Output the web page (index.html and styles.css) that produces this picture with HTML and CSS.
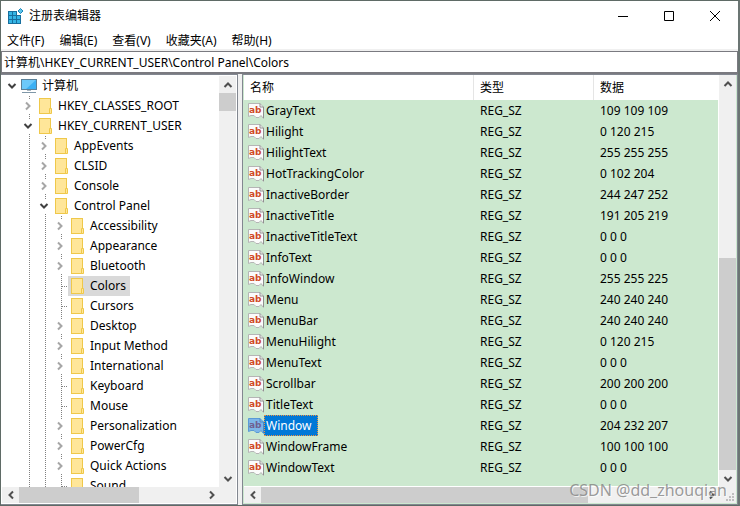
FILE: index.html
```html
<!DOCTYPE html>
<html lang="zh-CN">
<head>
    <meta charset="UTF-8">
    <meta name="viewport" content="width=device-width, initial-scale=1.0">
    <title>注册表编辑器</title>
    <link rel="stylesheet" href="styles.css">
</head>
<body>
    <!-- Shared icons -->
    <svg class="icon-defs" aria-hidden="true">
        <symbol id="folder" viewBox="0 0 16 16">
            <rect x="2.5" y="0.5" width="11" height="15" fill="#ffe699" stroke="#efc84a"/>
            <path d="M12.5 10.5h2v5h-2z" fill="#ffe699" stroke="#efc84a"/>
        </symbol>
        <symbol id="computer" viewBox="0 0 16 16">
            <rect x="0.5" y="1.5" width="15" height="10" fill="#3bb0f4" stroke="#5a8099"/>
            <path d="M1 2h14L5 11H1z" fill="#6cc9fa"/>
            <path d="M6 12h4v1H6z" fill="#a9b6c0"/>
            <path d="M1 14h14v1H1z" fill="#7f97a8"/>
        </symbol>
        <symbol id="string" viewBox="0 0 16 16">
            <path class="paper" d="M0.5 0.5H12L15.5 4v11.5L13 12.5l-2 2H8l-2-2H3l-2.500 1z"/>
            <path class="fold" d="M12 0.5V4h3.5V15"/>
            <text x="1" y="10" class="ab">ab</text>
        </symbol>
        <symbol id="down" viewBox="0 0 10 10"><path d="M1.5 3L5 6.5L8.5 3"/></symbol>
        <symbol id="up" viewBox="0 0 10 10"><path d="M1.5 7L5 3.5L8.5 7"/></symbol>
        <symbol id="right" viewBox="0 0 10 10"><path d="M3 1.5L6.5 5L3 8.5"/></symbol>
        <symbol id="left" viewBox="0 0 10 10"><path d="M7 1.5L3.5 5L7 8.5"/></symbol>
    </svg>

    <div class="window">
        <div class="title-bar">
            <svg class="app-icon" viewBox="0 0 16 16" aria-hidden="true">
                <path d="M0 3h13v13H0z" fill="#176f9e"/>
                <path d="M1 4h3v3H1zM5 4h3v3H5zM1 8h3v3H1zM5 8h3v3H5zM9 8h3v3H9zM1 12h3v3H1zM5 12h3v3H5zM9 12h3v3H9z" fill="#35b5e5"/>
                <path d="M9 2h7v5H9z" fill="#fff"/>
                <path d="M12.5 0.500L15 3L12.5 5.500L10 3z" fill="#5cc4ec" stroke="#1c86b8"/>
            </svg>
            <h1>注册表编辑器</h1>
            <div class="window-buttons">
                <button aria-label="最小化"><svg viewBox="0 0 10 10"><path d="M0 5.5h10"/></svg></button>
                <button aria-label="最大化"><svg viewBox="0 0 10 10"><path d="M0.5 0.5h9v9h-9z"/></svg></button>
                <button aria-label="关闭"><svg viewBox="0 0 10 10"><path d="M0 0L10 10M10 0L0 10"/></svg></button>
            </div>
        </div>

        <div class="menu-bar">
            <button>文件(F)</button>
            <button>编辑(E)</button>
            <button>查看(V)</button>
            <button>收藏夹(A)</button>
            <button>帮助(H)</button>
        </div>

        <input class="address" type="text" aria-label="地址" value="计算机\HKEY_CURRENT_USER\Control Panel\Colors">

        <div class="panes">
            <!-- Key tree -->
            <div class="pane tree-pane">
                <div class="pane-body">
                    <ul class="tree">
                        <li>
                            <div class="node"><span class="toggle root open"><svg><use href="#down"/></svg></span><span class="key"><svg class="icon"><use href="#computer"/></svg>计算机</span></div>
                            <ul>
                                <li><div class="node"><span class="toggle"><svg><use href="#right"/></svg></span><span class="key"><svg class="icon"><use href="#folder"/></svg>HKEY_CLASSES_ROOT</span></div></li>
                                <li class="branch">
                                    <div class="node"><span class="toggle open"><svg><use href="#down"/></svg></span><span class="key"><svg class="icon"><use href="#folder"/></svg>HKEY_CURRENT_USER</span></div>
                                    <ul>
                                        <li><div class="node"><span class="toggle"><svg><use href="#right"/></svg></span><span class="key"><svg class="icon"><use href="#folder"/></svg>AppEvents</span></div></li>
                                        <li><div class="node"><span class="toggle"><svg><use href="#right"/></svg></span><span class="key"><svg class="icon"><use href="#folder"/></svg>CLSID</span></div></li>
                                        <li><div class="node"><span class="toggle"><svg><use href="#right"/></svg></span><span class="key"><svg class="icon"><use href="#folder"/></svg>Console</span></div></li>
                                        <li class="branch">
                                            <div class="node"><span class="toggle open"><svg><use href="#down"/></svg></span><span class="key"><svg class="icon"><use href="#folder"/></svg>Control Panel</span></div>
                                            <ul>
                                                <li><div class="node"><span class="toggle"><svg><use href="#right"/></svg></span><span class="key"><svg class="icon"><use href="#folder"/></svg>Accessibility</span></div></li>
                                                <li><div class="node"><span class="toggle"><svg><use href="#right"/></svg></span><span class="key"><svg class="icon"><use href="#folder"/></svg>Appearance</span></div></li>
                                                <li><div class="node"><span class="toggle"><svg><use href="#right"/></svg></span><span class="key"><svg class="icon"><use href="#folder"/></svg>Bluetooth</span></div></li>
                                                <li><div class="node"><span class="toggle leaf"></span><span class="key current"><svg class="icon"><use href="#folder"/></svg>Colors</span></div></li>
                                                <li><div class="node"><span class="toggle leaf"></span><span class="key"><svg class="icon"><use href="#folder"/></svg>Cursors</span></div></li>
                                                <li><div class="node"><span class="toggle"><svg><use href="#right"/></svg></span><span class="key"><svg class="icon"><use href="#folder"/></svg>Desktop</span></div></li>
                                                <li><div class="node"><span class="toggle"><svg><use href="#right"/></svg></span><span class="key"><svg class="icon"><use href="#folder"/></svg>Input Method</span></div></li>
                                                <li><div class="node"><span class="toggle"><svg><use href="#right"/></svg></span><span class="key"><svg class="icon"><use href="#folder"/></svg>International</span></div></li>
                                                <li><div class="node"><span class="toggle leaf"></span><span class="key"><svg class="icon"><use href="#folder"/></svg>Keyboard</span></div></li>
                                                <li><div class="node"><span class="toggle leaf"></span><span class="key"><svg class="icon"><use href="#folder"/></svg>Mouse</span></div></li>
                                                <li><div class="node"><span class="toggle"><svg><use href="#right"/></svg></span><span class="key"><svg class="icon"><use href="#folder"/></svg>Personalization</span></div></li>
                                                <li><div class="node"><span class="toggle"><svg><use href="#right"/></svg></span><span class="key"><svg class="icon"><use href="#folder"/></svg>PowerCfg</span></div></li>
                                                <li><div class="node"><span class="toggle"><svg><use href="#right"/></svg></span><span class="key"><svg class="icon"><use href="#folder"/></svg>Quick Actions</span></div></li>
                                                <li><div class="node"><span class="toggle leaf"></span><span class="key"><svg class="icon"><use href="#folder"/></svg>Sound</span></div></li>
                                            </ul>
                                        </li>
                                    </ul>
                                </li>
                            </ul>
                        </li>
                    </ul>
                    <div class="scrollbar vertical tree-v">
                        <button aria-label="向上滚动"><svg><use href="#up"/></svg></button>
                        <div class="track"><div class="thumb"></div></div>
                        <button aria-label="向下滚动"><svg><use href="#down"/></svg></button>
                    </div>
                </div>
                <div class="scroll-row">
                    <div class="scrollbar tree-h">
                        <button aria-label="向左滚动"><svg><use href="#left"/></svg></button>
                        <div class="track"><div class="thumb"></div></div>
                        <button aria-label="向右滚动"><svg><use href="#right"/></svg></button>
                    </div>
                    <div class="corner"></div>
                </div>
            </div>

            <!-- Values of the selected key -->
            <div class="pane list-pane">
                <div class="pane-body">
                    <div class="list">
                        <table>
                            <thead>
                                <tr><th class="col-name">名称</th><th class="col-type">类型</th><th>数据</th></tr>
                            </thead>
                            <tbody>
                                <tr><td><span class="value"><svg class="icon"><use href="#string"/></svg><span>GrayText</span></span></td><td>REG_SZ</td><td>109 109 109</td></tr>
                                <tr><td><span class="value"><svg class="icon"><use href="#string"/></svg><span>Hilight</span></span></td><td>REG_SZ</td><td>0 120 215</td></tr>
                                <tr><td><span class="value"><svg class="icon"><use href="#string"/></svg><span>HilightText</span></span></td><td>REG_SZ</td><td>255 255 255</td></tr>
                                <tr><td><span class="value"><svg class="icon"><use href="#string"/></svg><span>HotTrackingColor</span></span></td><td>REG_SZ</td><td>0 102 204</td></tr>
                                <tr><td><span class="value"><svg class="icon"><use href="#string"/></svg><span>InactiveBorder</span></span></td><td>REG_SZ</td><td>244 247 252</td></tr>
                                <tr><td><span class="value"><svg class="icon"><use href="#string"/></svg><span>InactiveTitle</span></span></td><td>REG_SZ</td><td>191 205 219</td></tr>
                                <tr><td><span class="value"><svg class="icon"><use href="#string"/></svg><span>InactiveTitleText</span></span></td><td>REG_SZ</td><td>0 0 0</td></tr>
                                <tr><td><span class="value"><svg class="icon"><use href="#string"/></svg><span>InfoText</span></span></td><td>REG_SZ</td><td>0 0 0</td></tr>
                                <tr><td><span class="value"><svg class="icon"><use href="#string"/></svg><span>InfoWindow</span></span></td><td>REG_SZ</td><td>255 255 225</td></tr>
                                <tr><td><span class="value"><svg class="icon"><use href="#string"/></svg><span>Menu</span></span></td><td>REG_SZ</td><td>240 240 240</td></tr>
                                <tr><td><span class="value"><svg class="icon"><use href="#string"/></svg><span>MenuBar</span></span></td><td>REG_SZ</td><td>240 240 240</td></tr>
                                <tr><td><span class="value"><svg class="icon"><use href="#string"/></svg><span>MenuHilight</span></span></td><td>REG_SZ</td><td>0 120 215</td></tr>
                                <tr><td><span class="value"><svg class="icon"><use href="#string"/></svg><span>MenuText</span></span></td><td>REG_SZ</td><td>0 0 0</td></tr>
                                <tr><td><span class="value"><svg class="icon"><use href="#string"/></svg><span>Scrollbar</span></span></td><td>REG_SZ</td><td>200 200 200</td></tr>
                                <tr><td><span class="value"><svg class="icon"><use href="#string"/></svg><span>TitleText</span></span></td><td>REG_SZ</td><td>0 0 0</td></tr>
                                <tr><td><span class="value selected"><svg class="icon"><use href="#string"/></svg><span>Window</span></span></td><td>REG_SZ</td><td>204 232 207</td></tr>
                                <tr><td><span class="value"><svg class="icon"><use href="#string"/></svg><span>WindowFrame</span></span></td><td>REG_SZ</td><td>100 100 100</td></tr>
                                <tr><td><span class="value"><svg class="icon"><use href="#string"/></svg><span>WindowText</span></span></td><td>REG_SZ</td><td>0 0 0</td></tr>
                            </tbody>
                        </table>
                    </div>
                    <div class="scrollbar vertical list-v">
                        <button aria-label="向上滚动"><svg><use href="#up"/></svg></button>
                        <div class="track"><div class="thumb"></div></div>
                        <button aria-label="向下滚动"><svg><use href="#down"/></svg></button>
                    </div>
                </div>
                <div class="scroll-row">
                    <div class="scrollbar list-h">
                        <button aria-label="向左滚动"><svg><use href="#left"/></svg></button>
                        <div class="track"><div class="thumb"></div></div>
                        <button aria-label="向右滚动"><svg><use href="#right"/></svg></button>
                    </div>
                    <div class="corner">
                        <svg class="grip" viewBox="0 0 8 8" aria-hidden="true"><path d="M6 0h2v2H6zM3 3h2v2H3zM6 3h2v2H6zM0 6h2v2H0zM3 6h2v2H3zM6 6h2v2H6z"/></svg>
                    </div>
                </div>
            </div>
        </div>
        <span class="watermark">CSDN @dd_zhouqian</span>
    </div>
</body>
</html>
```
FILE: styles.css
```css
* {
    box-sizing: border-box;
}

body {
    margin: 0;
    font-family: "Noto Sans", "Noto Sans CJK SC", sans-serif;
    font-size: 12px;
    line-height: 20px;
    color: #000;
    background: #fff;
}

button,
input {
    font: inherit;
    color: inherit;
}

button {
    border: none;
    padding: 0;
    background: none;
}

.icon-defs {
    display: none;
}

.window {
    position: relative;
    display: flex;
    flex-direction: column;
    height: 100vh;
    border: 1px solid #5f6b66;
    border-right: 2px solid #6b7573;
    background: #fff;
}

/* Title bar and menu */
.title-bar {
    display: flex;
    align-items: center;
    height: 30px;
    padding-left: 7px;
}

.app-icon {
    width: 16px;
    height: 16px;
    margin-right: 5px;
}

.title-bar h1 {
    flex: 1;
    margin: 0;
    font-size: 12px;
    font-weight: 400;
}

.window-buttons {
    display: flex;
}

.window-buttons button {
    display: flex;
    align-items: center;
    justify-content: center;
    width: 46px;
    height: 30px;
}

.window-buttons svg {
    width: 10px;
    height: 10px;
    fill: none;
    stroke: #000;
}

.menu-bar {
    display: flex;
    gap: 15px;
    height: 20px;
    padding-left: 6px;
    border-bottom: 2px solid #f0f0f0;
}

.menu-bar button {
    line-height: 20px;
}

.address {
    height: 23px;
    padding: 0 2px;
    border: 1px solid #7a7a80;
    border-bottom-width: 2px;
    background: #fff;
    outline: none;
}

/* Panes */
.panes {
    display: flex;
    flex: 1;
    gap: 4px;
    min-height: 0;
    background: #f0f0f0;
}

.pane {
    display: flex;
    flex-direction: column;
    min-width: 0;
    border: 1px solid #828790;
}

.tree-pane {
    flex: 0 0 237px;
    padding: 1px;
    background: #fff;
    border-left: none;
}

.list-pane {
    flex: 1;
    background: #cce8cf;
    padding: 0 1px 1px;
}

.pane-body {
    display: flex;
    flex: 1;
    min-height: 0;
}

.icon {
    flex: none;
    width: 16px;
    height: 16px;
}

/* Tree */
.tree {
    flex: 1;
    overflow: hidden;
    padding: 0 0 0 2px;
}

.tree,
.tree ul {
    margin: 0;
    list-style: none;
}

.tree ul {
    padding-left: 16px;
}

.node {
    display: flex;
    height: 20px;
    white-space: nowrap;
}

.toggle,
.branch {
    background: repeating-linear-gradient(#808080 0 1px, #fff 1px 2px) 9px 0 / 1px 100% no-repeat;
}

.toggle {
    display: flex;
    align-items: center;
    width: 16px;
    padding-left: 3px;
}

.toggle svg {
    width: 10px;
    height: 14px;
    background: #fff;
    fill: none;
    stroke: #a6a6a6;
    stroke-width: 2;
}

.toggle.open svg {
    stroke: #404040;
}

.toggle.root {
    background: none;
}

.toggle.leaf::after {
    content: "";
    width: 6px;
    height: 1px;
    margin-left: 7px;
    background: repeating-linear-gradient(90deg, #808080 0 1px, #fff 1px 2px);
}

.key {
    display: flex;
    align-items: center;
    gap: 5px;
    padding: 0 4px 0 1px;
}

.key.current {
    background: #d9d9d9;
}

/* Value list */
.list {
    flex: 1;
    overflow: hidden;
    border-right: 1px solid #fff;
    border-bottom: 1px solid #fff;
}

table {
    width: 100%;
    border-collapse: separate;
    border-spacing: 0;
    table-layout: fixed;
}

.col-name {
    width: 230px;
}

.col-type {
    width: 120px;
}

th {
    height: 25px;
    padding: 0 6px;
    border-right: 1px solid #e5e5e5;
    background: #fff;
    font-weight: 400;
    text-align: left;
}

th:last-child {
    border-right: none;
}

td {
    height: 21px;
    padding: 0 6px;
    white-space: nowrap;
}

td:first-child {
    padding: 0 4px;
}

.value {
    display: flex;
    align-items: center;
}

.value > span {
    padding: 0 2px;
    line-height: 21px;
}

.value.selected > span {
    padding-right: 6px;
    outline: 1px dotted #f0953f;
    outline-offset: -1px;
    background: #0078d7;
    color: #fff;
}

.value.selected {
    --paper: #7db5e8;
    --edge: #5a9ad6;
    --fold: #4a8ac8;
    --letters: #6f5f92;
}

.paper {
    fill: var(--paper, #fbfbfb);
    stroke: var(--edge, #b5b5b5);
}

.fold {
    fill: none;
    stroke: var(--fold, #8f8f8f);
}

.ab {
    font: bold 9px "DejaVu Sans", sans-serif;
    fill: var(--letters, #d04a26);
}

/* Scrollbars */
.scroll-row {
    display: flex;
    height: 16px;
}

.scrollbar {
    display: flex;
    flex: 1;
    background: #f0f0f0;
}

.scrollbar.vertical {
    flex: 0 0 16px;
    flex-direction: column;
}

.scrollbar button {
    display: flex;
    flex: none;
    align-items: center;
    justify-content: center;
    width: 17px;
    height: 17px;
}

.scrollbar:not(.vertical) button {
    height: 16px;
}

.scrollbar button svg {
    width: 10px;
    height: 10px;
    fill: none;
    stroke: #505050;
    stroke-width: 2;
}

.track {
    display: flex;
    flex: 1;
    flex-direction: inherit;
}

.thumb {
    background: #cdcdcd;
}

.tree-v .thumb {
    height: 18px;
}

.tree-h .thumb {
    width: 65%;
}

.list-v .track {
    justify-content: flex-end;
}

.list-v .thumb {
    height: 56%;
}

.list-h .thumb {
    width: 74%;
}

.corner {
    display: flex;
    align-items: flex-end;
    justify-content: flex-end;
    width: 16px;
    padding: 2px;
    background: #f0f0f0;
}

.grip {
    width: 8px;
    height: 8px;
    fill: #bfbfbf;
}

.watermark {
    position: absolute;
    right: 11px;
    bottom: 5px;
    font-size: 16px;
    color: rgba(130, 130, 130, 0.8);
    text-shadow: 1px 1px 0 rgba(255, 255, 255, 0.7);
}
```
